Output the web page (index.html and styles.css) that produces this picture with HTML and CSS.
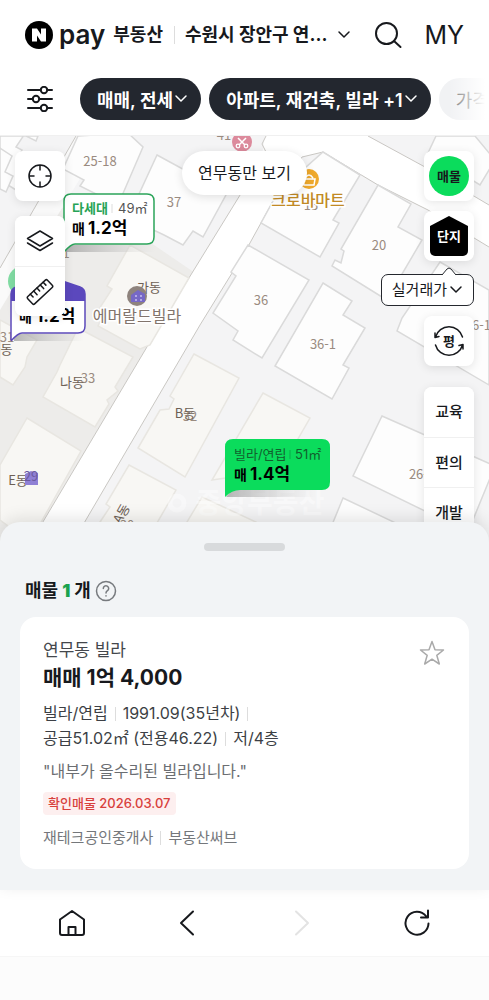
FILE: index.html
```html
<!DOCTYPE html>
<html lang="ko">
<head>
    <meta charset="UTF-8">
    <meta name="viewport" content="width=device-width, initial-scale=1">
    <title>N pay 부동산</title>
    <link rel="stylesheet" href="styles.css">
</head>
<body>

    <header class="top-bar">
        <a href="#" class="logo">
            <svg width="28" height="28" viewBox="0 0 28 28" aria-hidden="true">
                <circle cx="14" cy="14" r="14" fill="#000"/>
                <path d="M7 7.500h5l4 6v-6h5v13h-5l-4-6v6H7z" fill="#fff"/>
            </svg>
            <span class="logo-pay">pay</span>
            <span class="logo-name">부동산</span>
        </a>
        <button class="region">
            <span class="region-name">수원시 장안구 연...</span>
            <svg width="14" height="10" viewBox="0 0 14 10"><path d="M2 2l5 5 5-5" class="line"/></svg>
        </button>
        <button class="search" aria-label="검색">
            <svg width="28" height="28" viewBox="0 0 28 28"><g class="line thick"><circle cx="12.500" cy="12.500" r="10.500"/><path d="M20 20l6.500 6"/></g></svg>
        </button>
        <a href="#" class="my">MY</a>
    </header>

    <div class="filters">
        <button class="filter-icon" aria-label="필터">
            <svg width="26" height="26" viewBox="0 0 26 26">
                <g class="line thick">
                    <path d="M1 4h12M21 4h4M1 13h4M13 13h12M1 22h12M21 22h4"/>
                    <circle cx="17" cy="4" r="3.200"/><circle cx="9" cy="13" r="3.200"/><circle cx="17" cy="22" r="3.200"/>
                </g>
            </svg>
        </button>
        <button class="chip">매매, 전세 <svg width="14" height="10" viewBox="0 0 14 10"><path d="M2 2l5 5 5-5" class="line"/></svg></button>
        <button class="chip">아파트, 재건축, 빌라 +1 <svg width="14" height="10" viewBox="0 0 14 10"><path d="M2 2l5 5 5-5" class="line"/></svg></button>
        <button class="chip chip-light">가격</button>
    </div>

    <main class="map">
        <svg class="map-canvas" viewBox="0 136 489 406" preserveAspectRatio="xMidYMin slice">
            <defs>
                <linearGradient id="drop" x1="0" x2="1" y1="0" y2="0">
                    <stop offset="0" stop-color="#999" stop-opacity=".7"/>
                    <stop offset="1" stop-color="#bbb" stop-opacity="0"/>
                </linearGradient>
            </defs>

            <!-- ground -->
            <path d="M0 136h489v406H0z" fill="#f4f4f5"/>
            <path d="M0 270L40 205l70 10 88 60-38 50L31 542H0z" fill="#edecea"/>

            <!-- roads -->
            <path d="M265 136L262 155 245 187 160 325 31 542H73L200 325 245 252 278 192 302 157 323 152 378 185 428 210 489 247V205L425 167 368 136z" fill="#fff"/>
            <path d="M76 136L0 268v42l17-28L106 136z" fill="#fafafa"/>
            <g class="road-edge">
                <path d="M245 187L160 325 31 542M302 157L323 152 378 185 428 210 489 247M302 157L278 192 245 252 200 325 73 542M368 136L425 167 489 205M76 136L0 268M266 136l-4 8 4 8-6 6"/>
            </g>

            <!-- buildings -->
            <g class="lot">
                <path d="M0 136h38l-2 5-12-6-8 12 6 3-4 8 6 4-8 28-16-10z"/>
                <path d="M0 148l12 8-7 16 8 4-7 16-6-3z"/>
                <path d="M78 136L128 133 143 147 118 205 80 186 84 180 63 169z"/>
                <path d="M157 155L227 193 203 237 193 231 183 245 164 235 128 218z"/>
                <path d="M323 152L360 175 333 220 339 223 320 257 261 223 278 192z"/>
                <path d="M378 185L411 204 398 227 422 240 402 274 405 279 382 297 332 266 335 260 341 263 344 251 341 249z"/>
                <path d="M248 245L309 280 262 358 233 340 238 331 213 313 236 276 231 272z"/>
                <path d="M323 283L352 301 343 315 365 328 343 365 349 368 332 399 275 366z"/>
                <path d="M440 262L489 290V385L397 331 402 318z"/>
                <path d="M382 416L495 466 468 532 353 476z"/>
                <path d="M343 498L400 525 390 542H325z"/>
                <path d="M436 136L428 153 480 185 495 160 475 136z"/>
            </g>
            <g class="lot pale">
                <path d="M130 245L189 278 150 345 140 349 98 326 104 313 99 309 112 289 107 286z"/>
                <path d="M78 328L133 357 115 387 118 391 107 400 109 404 95 427 43 397 57 372 60 365z"/>
                <path d="M0 320L37 340 27 357 25 367 13 385 0 377z"/>
                <path d="M27 418L81 451 30 542 0 520V465z"/>
                <path d="M194 354L239 378 185 477 138 448 160 410 169 409 174 399 170 396z"/>
                <path d="M129 465L176 490 146 542 100 522 110 507 106 504z"/>
                <path d="M263 393L310 418 280 470 212 480z"/>
                <path d="M202 497L256 522 245 542H175z"/>
            </g>

            <!-- lot numbers -->
            <g class="number">
                <text x="224" y="140">41</text>
                <text x="100" y="166">25-18</text>
                <text x="174" y="207">37</text>
                <text x="379" y="250">20</text>
                <text x="261" y="305">36</text>
                <text x="323" y="349">36-1</text>
                <text x="311" y="210">13</text>
                <text x="478" y="330">26-1</text>
                <text x="422" y="479">26-5</text>
                <text x="7" y="342">31</text>
                <text x="66" y="258">1</text>
                <text x="88" y="383">33</text>
                <text x="190" y="421">32</text>
                <text x="127" y="530">30</text>
            </g>
            <g class="building">
                <text x="149" y="292">가동</text>
                <text x="72" y="387">나동</text>
                <text x="2" y="354">D동</text>
                <text x="185" y="418">B동</text>
                <text x="18" y="485">E동</text>
                <text x="122" y="518" transform="rotate(-60 122 514)">A동</text>
            </g>

            <!-- places -->
            <circle cx="242" cy="142" r="10" fill="#dc8a9c"/>
            <path d="M238 138l7 7M246 138l-7 7" stroke="#fff" stroke-width="1.500"/>
            <g fill="none" stroke="#fff" stroke-width="1.300"><circle cx="238" cy="146" r="1.800"/><circle cx="246" cy="146" r="1.800"/></g>
            <circle cx="309" cy="179" r="10" fill="#efa92c"/>
            <path d="M303 179h12l-1 6h-10zM305 178q4-6 8 0" fill="none" stroke="#fff" stroke-width="1.500"/>
            <text x="308" y="206" class="place shop">크로바마트</text>

            <circle cx="137" cy="296" r="10" fill="#8e837d"/>
            <path d="M131 295l7-5 7 4v8h-14z" fill="#7668c6"/>
            <path d="M135 296h2m3 0h2m-7 4h2m3 0h2" stroke="#c7bff0" stroke-width="1.500"/>
            <text x="137" y="322" class="place">에머랄드빌라</text>
            <path d="M25 474l6-3 7 2v12H25z" fill="#8f80d5"/>
            <text x="31" y="481" class="number over">29</text>

            <text x="260" y="513" class="watermark">중앙부동산</text>
            <circle cx="177" cy="503" r="7" class="watermark-ring"/>

            <!-- price markers -->
            <circle cx="23" cy="281" r="15" fill="#82dda4"/>
            <path d="M67 245h88v7H67z" fill="url(#drop)"/>
            <path d="M64 251V201q0-7 7-7h76q7 0 7 7v36q0 7-7 7H75q-4 0-11 8" fill="#fff" stroke="#2ba45a" stroke-width="1.500"/>
            <text x="72" y="213" class="kind green">다세대</text>
            <path d="M112 204v9" stroke="#ddd"/>
            <text x="118" y="213" class="kind">49㎡</text>
            <text x="72" y="234" class="deal">매</text>
            <text x="88" y="234" class="price">1.2억</text>

            <path d="M14 334h70v7H14z" fill="url(#drop)"/>
            <path d="M11 340V294q0-5 5-7l29-12 35 12q5 2 5 7v32q0 7-7 7H22q-4 0-11 8" fill="#fff" stroke="#5c4abb" stroke-width="1.500"/>
            <path d="M11 301v-7q0-5 5-7l29-12 35 12q5 2 5 7v7z" fill="#5b48bd"/>
            <text x="19" y="322" class="deal">매</text>
            <text x="36" y="322" class="price">1.2억</text>

            <path d="M232 490h84v7h-90z" fill="url(#drop)"/>
            <path d="M225 497V447q0-8 8-8h89q8 0 8 8v35q0 8-8 8h-82q-8 0-15 7z" fill="#0bdc5c"/>
            <text x="234" y="459" class="kind dark">빌라/연립</text>
            <path d="M290 450v9" stroke="#0aa94a"/>
            <text x="295" y="459" class="kind dark">51㎡</text>
            <text x="234" y="480" class="deal">매</text>
            <text x="250" y="480" class="price">1.4억</text>
        </svg>

        <div class="controls">
            <div class="control-column">
                <button class="control" aria-label="현재 위치">
                    <svg width="26" height="26" viewBox="0 0 26 26"><path class="line" d="M13 2a11 11 0 1 0 0 22a11 11 0 1 0 0-22M13 2v5M13 19v5M2 13h5M19 13h5"/></svg>
                </button>
                <div class="control-group">
                    <button class="control" aria-label="지도 유형">
                        <svg width="28" height="24" viewBox="0 0 28 24"><path class="line" d="M14 2l12.500 7.500L14 17 1.500 9.500zM1.500 14L14 21.500 26.500 14"/></svg>
                    </button>
                    <button class="control" aria-label="거리 재기">
                        <svg width="28" height="28" viewBox="0 0 28 28"><g class="line" transform="rotate(-43 14 14)"><rect x="0.500" y="9" width="27" height="10" rx="1.500"/><path d="M5.500 9v4M10 9v5M14.500 9v4M19 9v5M23 9v4"/></g></svg>
                    </button>
                </div>
            </div>

            <button class="only-here">연무동만 보기</button>

            <div class="control-column control-column-right">
                <button class="control"><span class="badge-round">매물</span></button>
                <button class="control"><span class="badge-house">단지</span></button>
                <button class="trade-price">
                    실거래가
                    <svg width="14" height="10" viewBox="0 0 14 10"><path d="M2 2l5 5 5-5" class="line"/></svg>
                    <svg class="trade-tip" width="14" height="8" viewBox="0 0 14 8"><path d="M0 8l5-6q2-2 4 0l5 6" fill="#fff" stroke="#25282e"/></svg>
                </button>
                <button class="control control-unit">
                    <svg class="unit-ring" width="32" height="32" viewBox="0 0 32 32"><path class="line" d="M2.500 12a14 14 0 0 1 27 0M29.500 20a14 14 0 0 1-27 0M2 8v4.500l4-1M30 24v-4.500l-4 1"/></svg>
                    <span>평</span>
                </button>
                <div class="control-group">
                    <button class="control">교육</button>
                    <button class="control">편의</button>
                    <button class="control">개발</button>
                </div>
            </div>
        </div>
    </main>

    <section class="sheet">
        <div class="handle"></div>
        <h2>매물 <b>1</b> 개
            <button class="help" aria-label="도움말">
                <svg width="22" height="22" viewBox="0 0 22 22" fill="none" stroke="#777a7e" stroke-width="1.500" stroke-linecap="round"><circle cx="11" cy="11" r="9.500"/><path d="M8.300 8.500a2.700 2.700 0 1 1 4.200 2.200q-1.500 1-1.500 2.300"/><path d="M11 15.800v.2"/></svg>
            </button>
        </h2>

        <article class="card">
            <div class="card-head">
                <div>
                    <div class="card-name">연무동 빌라</div>
                    <div class="card-price">매매 1억 4,000</div>
                </div>
                <button class="star" aria-label="관심 매물">
                    <svg width="26" height="26" viewBox="0 0 26 26"><path d="M13 1.500l3 8.200 8.500.300-6.700 5.300 2.500 8.700L13 19.200 5.700 24l2.500-8.700L1.500 10l8.500-.300z" fill="none" stroke="#aaa" stroke-width="1.500" stroke-linejoin="round"/></svg>
                </button>
            </div>
            <div class="specs"><span>빌라/연립</span><span>1991.09(35년차)</span><span></span></div>
            <div class="specs"><span>공급51.02㎡ (전용46.22)</span><span>저/4층</span></div>
            <p class="comment">"내부가 올수리된 빌라입니다."</p>
            <div class="verified">확인매물 2026.03.07</div>
            <div class="specs agent"><span>재테크공인중개사</span><span>부동산써브</span></div>
        </article>
    </section>

    <nav class="bottom-nav">
        <a href="#" aria-label="홈"><svg width="28" height="28" viewBox="0 0 28 28"><path class="line thick" d="M2 10.500L14 2l12 8.500V24q0 2-2 2H4q-2 0-2-2zM10.500 26v-8h7v8"/></svg></a>
        <button aria-label="뒤로"><svg width="28" height="28" viewBox="0 0 28 28"><path class="line thick" d="M20 2.500L8 14l12 11.500"/></svg></button>
        <button aria-label="앞으로" disabled><svg width="28" height="28" viewBox="0 0 28 28"><path class="line thick" d="M8 2.500L20 14 8 25.500"/></svg></button>
        <button aria-label="새로고침"><svg width="28" height="28" viewBox="0 0 28 28"><path class="line thick" d="M25.500 14.500A11.500 11.500 0 1 1 23 7M25 1.500v7h-7"/></svg></button>
    </nav>

</body>
</html>
```
FILE: styles.css
```css
* {
    box-sizing: border-box;
}
body {
    margin: 0;
    min-height: 100vh;
    display: flex;
    flex-direction: column;
    background: #fcfcfc;
    color: #17191d;
    font-family: Inter, "Noto Sans CJK KR", sans-serif;
    padding-bottom: 43px;
}
button {
    margin: 0;
    padding: 0;
    border: none;
    background: none;
    color: inherit;
    font: inherit;
    cursor: pointer;
}
a {
    color: inherit;
    text-decoration: none;
}
svg {
    display: block;
    flex: none;
}
.line {
    fill: none;
    stroke: currentColor;
    stroke-width: 1.5;
    stroke-linecap: round;
    stroke-linejoin: round;
}
.thick {
    stroke-width: 2;
}

/* header */
.top-bar {
    display: flex;
    align-items: center;
    height: 70px;
    padding: 0 25px;
    background: #fff;
}
.logo {
    display: flex;
    align-items: center;
    white-space: nowrap;
}
.logo-pay {
    margin: 0 8px 0 6px;
    font-size: 26px;
    line-height: 28px;
    font-weight: 600;
}
.logo-name,
.region {
    font-size: 18px;
    line-height: 28px;
    font-weight: 700;
}
.region {
    display: flex;
    align-items: center;
    gap: 10px;
    margin-left: 11px;
    white-space: nowrap;
}
.region::before {
    content: "";
    width: 1px;
    height: 18px;
    background: #ddd;
}
.search {
    margin-left: auto;
}
.my {
    margin-left: 22px;
    font-size: 25px;
    line-height: 28px;
}

/* filters */
.filters {
    position: relative;
    display: flex;
    align-items: center;
    gap: 8px;
    height: 66px;
    padding: 0 0 8px 27px;
    overflow: hidden;
    background: #fff;
    border-bottom: 1px solid #f0f0f0;
}
.filters::after {
    content: "";
    position: absolute;
    top: 0;
    right: 0;
    width: 40px;
    height: 60px;
    background: linear-gradient(to right, rgba(255, 255, 255, 0), #fff 90%);
}
.filter-icon {
    margin-right: 19px;
}
.chip {
    display: flex;
    align-items: center;
    gap: 1px;
    flex: none;
    height: 42px;
    padding: 0 13px 0 17px;
    border-radius: 21px;
    background: #23272f;
    color: #fff;
    font-size: 18px;
    font-weight: 600;
}
.chip-light {
    background: #f1f2f4;
    color: #777;
    font-weight: 400;
}

/* map */
.map {
    position: relative;
    flex: 1 0 406px;
    overflow: hidden;
    background: #f4f4f5;
}
.map-canvas {
    position: absolute;
    inset: 0;
    width: 100%;
    height: 100%;
}
.road-edge {
    fill: none;
    stroke: #c9c7c3;
}
.lot {
    fill: #fdfdfd;
    stroke: #dadada;
    stroke-width: 1.5;
}
.lot.pale {
    fill: #f8f7f4;
    stroke: #e8e6e1;
}
.number,
.building,
.place {
    font-family: "Noto Sans CJK KR", sans-serif;
    font-size: 13px;
    text-anchor: middle;
    fill: #9a8b80;
}
.building {
    fill: #6d6055;
}
.place {
    font-size: 16px;
    fill: #82746c;
    stroke: #fff;
    stroke-width: 3;
    paint-order: stroke;
}
.place.shop {
    font-weight: 500;
    fill: #c18a25;
}
.number.over {
    fill: #6c5ba0;
}
.watermark {
    font-size: 28px;
    font-weight: 700;
    text-anchor: middle;
    fill: #fff;
    opacity: .4;
}
.watermark-ring {
    fill: none;
    stroke: #fff;
    stroke-width: 5;
    opacity: .4;
}
.kind {
    font-size: 13px;
    fill: #555;
}
.kind.green {
    font-weight: 700;
    fill: #27a356;
}
.kind.dark {
    fill: #12602e;
}
.deal {
    font-size: 14px;
    font-weight: 700;
}
.price {
    font-size: 17px;
    font-weight: 700;
}
.controls {
    position: relative;
    display: flex;
    justify-content: space-between;
    align-items: flex-start;
    padding: 15px;
    height: 0;
}
.control-column {
    display: flex;
    flex-direction: column;
    align-items: flex-end;
    gap: 15px;
    width: 50px;
}
.control-column-right {
    gap: 10px;
}
.control-column-right .control-group {
    margin-top: 11px;
}
.control,
.control-group {
    border-radius: 8px;
    background: #fff;
    box-shadow: 0 2px 10px rgba(0, 0, 0, .1);
}
.control {
    position: relative;
    display: flex;
    align-items: center;
    justify-content: center;
    width: 50px;
    height: 50px;
    font-size: 15px;
    line-height: 20px;
    font-weight: 500;
}
.control-group .control {
    box-shadow: none;
}
.control-group .control + .control {
    border-top: 1px solid #f0f0f0;
    border-radius: 0 0 8px 8px;
}
.control-unit {
    font-size: 13px;
    font-weight: 700;
}
.unit-ring {
    position: absolute;
    inset: 9px;
}
.badge-round,
.badge-house {
    display: flex;
    align-items: center;
    justify-content: center;
    width: 40px;
    height: 40px;
    font-size: 13px;
    font-weight: 700;
}
.badge-round {
    border-radius: 50%;
    background: #0bdc5c;
}
.badge-house {
    width: 38px;
    border-radius: 0 0 5px 5px;
    background: #000;
    color: #fff;
    clip-path: polygon(50% 0, 100% 25%, 100% 100%, 0 100%, 0 25%);
}
.trade-price {
    position: relative;
    display: flex;
    align-items: center;
    gap: 2px;
    height: 32px;
    margin-top: 3px;
    padding: 0 10px;
    border: 1px solid #25282e;
    border-radius: 7px;
    background: #fff;
    font-size: 15px;
    line-height: 20px;
    white-space: nowrap;
}
.trade-tip {
    position: absolute;
    top: -8px;
    right: 17px;
}
.only-here {
    height: 44px;
    padding: 0 16px;
    border-radius: 22px;
    background: #fff;
    box-shadow: 0 2px 10px rgba(0, 0, 0, .12);
    font-size: 16px;
    line-height: 20px;
}

/* listing sheet */
.sheet {
    position: relative;
    margin-top: -20px;
    padding: 21px 20px;
    border-radius: 20px 20px 0 0;
    background: #f2f4f6;
    box-shadow: 0 -4px 16px rgba(0, 0, 0, .1);
}
.handle {
    width: 81px;
    height: 8px;
    margin: 0 auto;
    border-radius: 4px;
    background: #d8dadc;
}
.sheet h2 {
    display: flex;
    align-items: center;
    gap: 4px;
    margin: 26px 5px 12px;
    font-size: 18px;
    line-height: 28px;
    font-weight: 700;
}
.sheet h2 b {
    color: #1ba34f;
}
.card {
    padding: 20px 23px 19px;
    border-radius: 16px;
    background: #fff;
}
.card-head {
    display: flex;
    justify-content: space-between;
    align-items: flex-start;
    margin-bottom: 8px;
}
.card-name {
    font-size: 17px;
    line-height: 26px;
    color: #44474c;
}
.card-price {
    font-size: 21px;
    line-height: 30px;
    font-weight: 700;
}
.star {
    margin: 3px 1px 0;
}
.specs {
    display: flex;
    align-items: center;
    font-size: 16px;
    line-height: 25px;
    min-height: 25px;
    color: #3c3f45;
}
.specs span + span::before {
    content: "";
    display: inline-block;
    width: 1px;
    height: 14px;
    margin: 0 7px;
    background: #ddd;
    vertical-align: -2px;
}
.comment {
    margin: 8px 0;
    font-size: 16px;
    line-height: 25px;
    color: #6b6e72;
}
.verified {
    width: fit-content;
    margin-bottom: 10px;
    padding: 0 5px;
    border-radius: 4px;
    background: #fdefef;
    color: #d8403c;
    font-size: 13px;
    line-height: 23px;
    font-weight: 500;
}
.specs.agent {
    font-size: 15px;
    color: #74777b;
}

/* browser bar */
.bottom-nav {
    display: flex;
    justify-content: space-around;
    align-items: center;
    height: 67px;
    padding: 0 15px;
    background: #fff;
    border-bottom: 1px solid #f6f6f6;
}
.bottom-nav button:disabled {
    color: #e3e3e3;
}
```
